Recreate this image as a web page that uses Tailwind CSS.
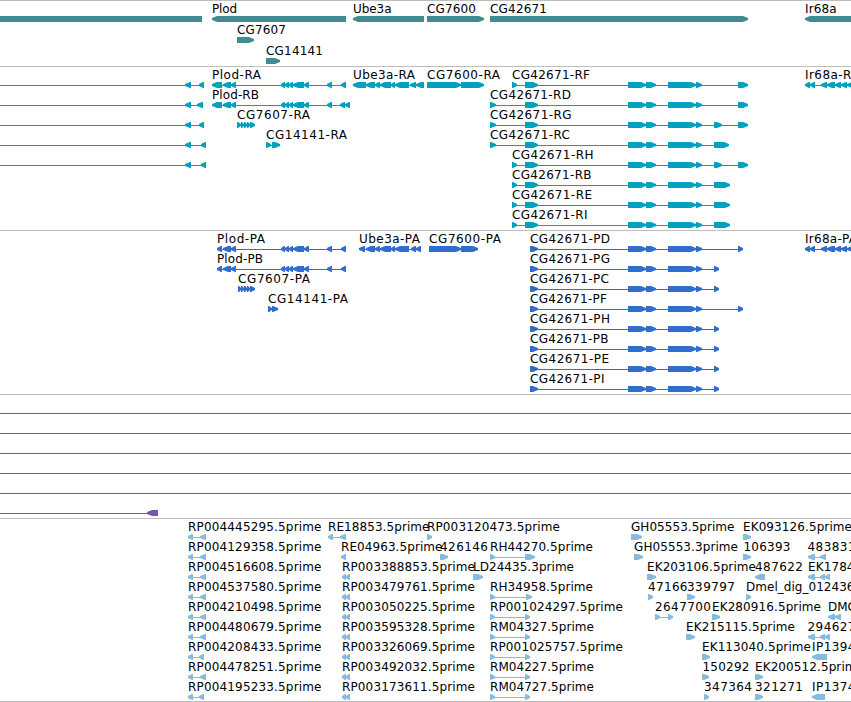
<!DOCTYPE html>
<html lang="en">
<head>
  <meta charset="UTF-8" />
  <meta name="viewport" content="width=device-width, initial-scale=1.0" />
  <title>Genome browser</title>
  <script src="https://cdn.jsdelivr.net/npm/@tailwindcss/browser@4"></script>
</head>
<body class="bg-white overflow-hidden">
  <main class="flex flex-col w-[851px] h-[702px] overflow-hidden border-b border-[#bebebe] font-['DejaVu_Sans',sans-serif] text-xs text-black">
    <section id="genes" class="h-[66px] shrink-0 border-t border-[#bebebe] pt-0.5 text-[#408c93]"></section>
    <section id="transcripts" class="h-[164px] shrink-0 border-t border-[#bebebe] pt-0.5 text-[#00a0c0]"></section>
    <section id="proteins" class="h-[164px] shrink-0 border-t border-[#bebebe] pt-0.5 text-[#316dcd]"></section>
    <section id="insertions" class="h-[124px] shrink-0 border-t border-[#bebebe] pt-0.5 text-[#7558ab]"></section>
    <section id="ests" class="h-[183px] shrink-0 border-t border-[#bebebe] pt-0.5 text-[#87bbde]"></section>
  </main>

  <script>
    const NS = "http://www.w3.org/2000/svg";

    // feature: [label, x, label width, direction, blocks "from-to ..."]
    const plod = "281-285 285-289 289-293 293-304 304-309 327-332";
    const ube = "366-375 375-380 380-391 391-395 395-409";
    const cg = "628-646 646-656 668-696 696-702";
    const ir = "805-810 810-815 821-827 827-835 835-841 841-847 847-853";
    const left = (blocks) => ["", 0, 0, "<", "-20--10 " + blocks];

    const genes = [
      [["", 0, 0, "|", "-5-202"], ["Plod", 212, 25, "<", "212-346"], ["Ube3a", 353, 38.5, "<", "353-424"],
       ["CG7600", 427, 49, ">", "427-484"], ["CG42671", 490, 57, ">", "490-748"], ["Ir68a", 805, 31.5, "<", "805-870"]],
      [["CG7607", 237, 49, ">", "237-254"]],
      [["CG14141", 266, 57, ">", "266-280"]],
    ];

    const transcripts = [
      [left("185-191 199-204"), ["Plod-RA", 212, 49, "<", "212-222 223-231 231-236 " + plod + " 341-346"],
       ["Ube3a-RA", 353, 62, "<", "353-366 " + ube + " 410-416 416-424"], ["CG7600-RA", 427, 73, ">", "427-461 461-484"],
       ["CG42671-RF", 512, 78, ">", "512-517 525-538 " + cg + " 738-748"], ["Ir68a-RA", 805, 54.5, "<", ir]],
      [left("185-191 197-203"), ["Plod-RB", 212, 47, "<", "212-222 223-231 231-236 " + plod + " 340-345 345-350"],
       ["CG42671-RD", 490, 81, ">", "490-496 525-538 " + cg + " 738-748"]],
      [left("185-191 199-204"), ["CG7607-RA", 237, 73, ">", "237-241 241-244 244-247 247-250 250-255"],
       ["CG42671-RG", 490, 81.5, ">", "490-496 525-538 " + cg + " 714-722 738-748"]],
      [left("185-191 201-206"), ["CG14141-RA", 266, 81, ">", "266-271 272-280"],
       ["CG42671-RC", 490, 80, ">", "490-496 525-538 " + cg + " 714-729"]],
      [left("185-191 201-206"), ["CG42671-RH", 512, 81.5, ">", "512-517 525-538 " + cg + " 714-722 738-748"]],
      [["CG42671-RB", 512, 79.5, ">", "512-517 525-538 " + cg + " 714-730"]],
      [["CG42671-RE", 512, 80, ">", "512-517 525-538 " + cg + " 714-730"]],
      [["CG42671-RI", 512, 75.5, ">", "512-517 525-538 " + cg + " 714-730"]],
    ];

    const proteins = [
      [["Plod-PA", 217, 48, "<", "217-222 223-231 231-236 " + plod + " 341-346"],
       ["Ube3a-PA", 359, 61, "<", "359-365 " + ube + " 411-416 416-421"], ["CG7600-PA", 429, 72, ">", "429-461 461-478"],
       ["CG42671-PD", 530, 80, ">", "530-538 " + cg + " 738-743"], ["Ir68a-PA", 805, 52, "<", ir]],
      [["Plod-PB", 217, 46, "<", "217-222 223-231 231-236 " + plod + " 341-346"],
       ["CG42671-PG", 530, 80, ">", "530-538 " + cg + " 714-719"]],
      [["CG7607-PA", 238, 72, ">", "238-241 241-244 244-247 247-250 250-255"],
       ["CG42671-PC", 530, 79, ">", "530-538 " + cg + " 714-719"]],
      [["CG14141-PA", 268, 80, ">", "268-272 272-278"],
       ["CG42671-PF", 530, 77, ">", "530-538 " + cg + " 738-743"]],
      [["CG42671-PH", 530, 80, ">", "530-538 " + cg + " 714-719"]],
      [["CG42671-PB", 530, 78.5, ">", "530-538 " + cg + " 714-719"]],
      [["CG42671-PE", 530, 79, ">", "530-538 " + cg + " 714-719"]],
      [["CG42671-PI", 530, 74.5, ">", "530-538 " + cg + " 714-719"]],
    ];

    const through = [["", 0, 0, "<", "-20--10 870-880"]];
    const insertions = [through, through, through, through, through, [left("147-158")]];

    const ests = [
      [["RP004445295.5prime", 188, 133.5, "<", "188-193 200-206"], ["RE18853.5prime", 328, 101.5, "<", "328-333 340-346"],
       ["RP003120473.5prime", 427, 133, ">", "427-432"], ["GH05553.5prime", 631, 103.5, ">", "631-642"],
       ["EK093126.5prime", 743, 109, ">", "743-751"]],
      [["RP004129358.5prime", 188, 133.5, "<", "188-193 200-206"], ["RE04963.5prime", 341, 101.5, "<", "341-346"],
       ["426146", 440, 48, ">", "440-448"], ["RH44270.5prime", 490, 103, ">", "490-495 525-535"],
       ["GH05553.3prime", 634, 104, ">", "634-643"], ["106393", 743.5, 47, ">", "743-751"], ["483831", 807.5, 48, "<", "808-815 820-826"]],
      [["RP004516608.5prime", 188, 133.5, "<", "188-193 200-206"], ["RP003388853.5prime", 342, 133, "<", "342-346 346-350"],
       ["LD24435.3prime", 473, 101, ">", "473-483"], ["EK203106.5prime", 647, 109, ">", "647-656"],
       ["487622", 755, 48, "<", "755-765"], ["EK1784", 808, 46.5, "<", "808-815 820-825 825-830"]],
      [["RP004537580.5prime", 188, 133.5, "<", "188-193 200-206"], ["RP003479761.5prime", 342, 133, "<", "342-346 346-350"],
       ["RH34958.5prime", 490, 103, ">", "490-495 526-532"], ["47166", 648, 39.5, ">", "648-653"],
       ["339797", 687, 48, ">", "687-695"], ["Dmel_dig_012436", 746, 108.5, ">", "746-751"]],
      [["RP004210498.5prime", 188, 133.5, "<", "188-193 200-206"], ["RP003050225.5prime", 342, 133, "<", "342-346 346-350"],
       ["RP001024297.5prime", 490, 133, ">", "490-495 525-530"], ["2647700", 655, 56, ">", "655-660 668-673"],
       ["EK280916.5prime", 712, 109, ">", "712-720"], ["DMC", 828, 28, "<", "828-835 835-841"]],
      [["RP004480679.5prime", 188, 133.5, "<", "188-193 200-206"], ["RP003595328.5prime", 342, 133, "<", "342-346 346-350"],
       ["RM04327.5prime", 490, 104, ">", "490-495 525-530"], ["EK215115.5prime", 686, 109, ">", "686-695"],
       ["294627", 807.5, 48, "<", "808-815 820-825 825-830"]],
      [["RP004208433.5prime", 188, 133.5, "<", "188-193 199-204"], ["RP003326069.5prime", 342, 133, "<", "342-346 346-350"],
       ["RP001025757.5prime", 490, 133, ">", "490-495 525-530"], ["EK113040.5prime", 702, 109, ">", "702-710"],
       ["IP1394", 812, 43.5, "<", "812-827"]],
      [["RP004478251.5prime", 188, 133.5, "<", "188-193 200-206"], ["RP003492032.5prime", 342, 133, "<", "342-346 346-350"],
       ["RM04227.5prime", 490, 104, ">", "490-495 525-530"], ["150292", 702.5, 47, ">", "702-709"],
       ["EK200512.5prime", 755, 109, ">", "755-763"]],
      [["RP004195233.5prime", 188, 133.5, "<", "188-193 199-204"], ["RP003173611.5prime", 342, 133, "<", "342-346 346-350"],
       ["RM04727.5prime", 490, 104, ">", "490-495 525-530"], ["347364", 704, 48, ">", "704-709"],
       ["321271", 755, 48, ">", "755-763"], ["IP1374", 812, 43.5, "<", "812-825"]],
    ];

    function add(parent, tag, attrs) {
      const el = document.createElementNS(NS, tag);
      for (const key in attrs) el.setAttribute(key, attrs[key]);
      parent.appendChild(el);
      return el;
    }

    // arrow heads keep a blunt 2px tip so that short exons stay solid
    function blockPoints(a, b, dir) {
      const head = Math.min(6, b - a);
      if (dir === "<") return `${a},15 ${a + head - 1},13 ${b},13 ${b},19 ${a + head - 1},19 ${a},17`;
      if (dir === ">") return `${b},15 ${b - head + 1},13 ${a},13 ${a},19 ${b - head + 1},19 ${b},17`;
      return `${a},13 ${b},13 ${b},19 ${a},19`;
    }

    function renderTrack(id, rows, rowClass) {
      const track = document.getElementById(id);
      rows.forEach((features) => {
        const svg = add(track, "svg", { class: rowClass });
        features.forEach(([label, x, width, dir, spec]) => {
          const blocks = spec.split(" ").map((s) => s.match(/^(-?\d+)-(-?\d+)$/).slice(1).map(Number));
          const start = blocks[0][0];
          const end = blocks[blocks.length - 1][1];
          add(svg, "rect", { x: start + 1, y: 16, width: end - start - 2, height: 1, fill: "currentColor" });
          blocks.forEach(([a, b]) => {
            add(svg, "polygon", { points: blockPoints(a, b, dir), fill: "currentColor" });
          });
          if (label) {
            const text = add(svg, "text", { x: x, y: 10, textLength: width, class: "fill-black" });
            text.textContent = label;
          }
        });
      });
    }

    renderTrack("genes", genes, "block w-full h-[21px] overflow-visible");
    renderTrack("transcripts", transcripts, "block w-full h-5 overflow-visible");
    renderTrack("proteins", proteins, "block w-full h-5 overflow-visible");
    renderTrack("insertions", insertions, "block w-full h-5 overflow-visible");
    renderTrack("ests", ests, "block w-full h-5 overflow-visible");
  </script>
</body>
</html>
